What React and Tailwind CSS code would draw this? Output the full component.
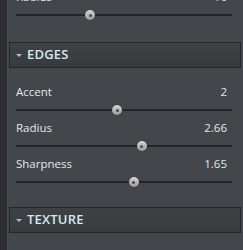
import React from 'react'

const font = { fontFamily: '"Open Sans", "DejaVu Sans", sans-serif' }

function Slider({ label, value, pos }) {
    return (
        <div>
            <div className="flex h-[20px] items-center justify-between px-[16px] text-[11.5px] text-[#e4e8ec]">
                <span>{label}</span>
                <span>{value}</span>
            </div>
            <div className="relative ml-[16px] mr-[11px] h-[16px]">
                <div className="absolute left-0 right-0 top-[7px] h-[2px] bg-[#222427]" />
                <div
                    className="absolute top-[3px] flex h-[10px] w-[10px] -translate-x-1/2 items-center justify-center rounded-full bg-gradient-to-b from-[#d4d4d4] to-[#9c9c9c] shadow-[0_0_1px_#1a1a1a]"
                    style={{ left: pos }}
                >
                    <div className="h-[3px] w-[3px] rounded-full bg-[#4a4a4a]" />
                </div>
            </div>
        </div>
    )
}

function Header({ title }) {
    return (
        <div className="flex h-[26px] items-center border border-[#25272a] bg-gradient-to-b from-[#3f4245] to-[#383b3e] pl-[6px]">
            <div className="mr-[5px] h-0 w-0 border-l-[3px] border-r-[3px] border-t-[3px] border-l-transparent border-r-transparent border-t-[#b4bcc4]" />
            <span className="text-[13px] font-semibold tracking-[0.2px] text-[#d8e6f0]">{title}</span>
        </div>
    )
}

export default function App() {
    return (
        <div className="flex h-[250px] w-[243px] overflow-hidden bg-[#43474b]" style={font}>
            <div className="w-[7px] shrink-0 bg-[#2c2e31]" />
            <div className="w-[1px] shrink-0 bg-[#4a4e52]" />
            <div className="flex-1">
                {/* previous section, scrolled partly out of view */}
                <div className="mt-[-13px] mb-[19px] -ml-[8px]">
                    <Slider label="Radius" value="10" pos="34.3%" />
                </div>

                <div className="ml-[1px] mr-[2px]">
                    <Header title="EDGES" />
                </div>

                <div className="-ml-[8px] pt-[14px] pb-[17px]">
                    <Slider label="Accent" value="2" pos="46.8%" />
                    <Slider label="Radius" value="2.66" pos="58.3%" />
                    <Slider label="Sharpness" value="1.65" pos="54.6%" />
                </div>

                <div className="ml-[1px] mr-[2px]">
                    <Header title="TEXTURE" />
                </div>
            </div>
        </div>
    )
}
